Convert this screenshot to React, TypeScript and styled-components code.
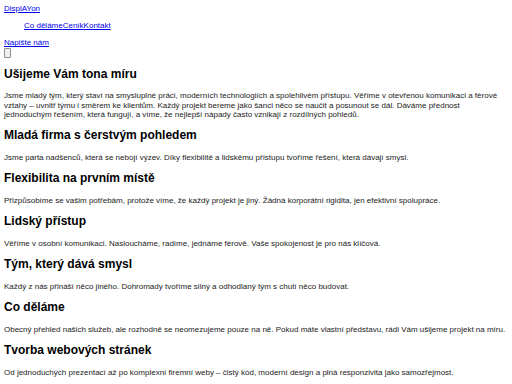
import React from 'react';
import styled, { createGlobalStyle } from 'styled-components';

const GlobalStyle = createGlobalStyle`
    html, body {
        margin: 0;
        padding: 0;
        background: #ffffff;
    }

    body {
        padding: 4px;
        font-family: "Liberation Sans", Arial, sans-serif;
        font-size: 8px;
        line-height: normal;
        color: #000000;
    }
`;

interface Section {
    title: string;
    text: string;
}

const SECTIONS: Section[] = [
    {
        title: 'Ušijeme Vám tona míru',
        text: 'Jsme mladý tým, který staví na smysluplné práci, moderních technologiích a spolehlivém přístupu. Věříme v otevřenou komunikaci a férové vztahy – uvnitř týmu i směrem ke klientům. Každý projekt bereme jako šanci něco se naučit a posunout se dál. Dáváme přednost jednoduchým řešením, která fungují, a víme, že nejlepší nápady často vznikají z rozdílných pohledů.',
    },
    {
        title: 'Mladá firma s čerstvým pohledem',
        text: 'Jsme parta nadšenců, která se nebojí výzev. Díky flexibilitě a lidskému přístupu tvoříme řešení, která dávají smysl.',
    },
    {
        title: 'Flexibilita na prvním místě',
        text: 'Přizpůsobíme se vašim potřebám, protože víme, že každý projekt je jiný. Žádná korporátní rigidita, jen efektivní spolupráce.',
    },
    {
        title: 'Lidský přístup',
        text: 'Věříme v osobní komunikaci. Nasloucháme, radíme, jednáme férově. Vaše spokojenost je pro nás klíčová.',
    },
    {
        title: 'Tým, který dává smysl',
        text: 'Každý z nás přináší něco jiného. Dohromady tvoříme silný a odhodlaný tým s chutí něco budovat.',
    },
    {
        title: 'Co děláme',
        text: 'Obecný přehled našich služeb, ale rozhodně se neomezujeme pouze na ně. Pokud máte vlastní představu, rádi Vám ušijeme projekt na míru.',
    },
    {
        title: 'Tvorba webových stránek',
        text: 'Od jednoduchých prezentací až po komplexní firemní weby – čistý kód, moderní design a plná responzivita jako samozřejmost.',
    },
];

const NAV_ITEMS = ['Co děláme', 'Ceník', 'Kontakt'];

export default function App() {
    return (<Page>
        <GlobalStyle />

        {/* Header */}
        <Header>
            <Logo><Link href={'#'}>DisplAYon</Link></Logo>
            <NavList>
                {NAV_ITEMS.map(item => <li key={item}><Link href={'#'}>{item}</Link></li>)}
            </NavList>
            <Cta><Link href={'#'}>Napište nám</Link></Cta>
            <MenuButton aria-label={'Menu'} />
        </Header>

        {/* Content */}
        <main>
            {SECTIONS.map(section => <SectionBlock key={section.title}>
                <SectionTitle>{section.title}</SectionTitle>
                <SectionText>{section.text}</SectionText>
            </SectionBlock>)}
        </main>
    </Page>);
}

const Page = styled.div`
    width: 504px;
`;

const Header = styled.header`
    display: flex;
    flex-direction: column;
    align-items: flex-start;
`;

const Link = styled.a`
    color: #0000ee;
    text-decoration: underline;
`;

const Logo = styled.div`
    line-height: 9.2px;
`;

const NavList = styled.ul`
    display: flex;
    list-style: none;
    margin: 8px 0;
    padding: 0 0 0 20px;
    line-height: 9.2px;
`;

const Cta = styled.div`
    line-height: 9.2px;
`;

const MenuButton = styled.button`
    width: 7px;
    height: 10px;
    padding: 0;
    margin: 0;
    background: #efefef;
    border: 1px solid #8f8f8f;
    border-radius: 1px;
`;

const SectionBlock = styled.section`
    display: block;
`;

const SectionTitle = styled.h2`
    font-size: 12px;
    font-weight: bold;
    line-height: 13.8px;
    margin: 10px 0;
`;

const SectionText = styled.p`
    font-size: 8px;
    line-height: 9.2px;
    margin: 8px 0;
    color: #222222;
`;
